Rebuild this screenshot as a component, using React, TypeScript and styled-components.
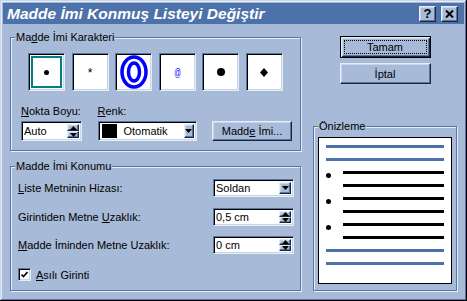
import styled, { createGlobalStyle, css } from "styled-components";

const face = "#a7bad7";
const titleBlue = "#4c72a9";
const highlight = "#e6edf7";
const light = "#c9d6ea";
const shadow = "#5776a6";
const darkShadow = "#1c2535";

const GlobalStyle = createGlobalStyle`
  * {
    box-sizing: border-box;
  }
  html, body {
    margin: 0;
    padding: 0;
    background: ${face};
  }
  body {
    font-family: "Liberation Sans", Arial, sans-serif;
    font-size: 11px;
    color: #000;
  }
`;

const raised = css`
  background: ${face};
  border: 1px solid;
  border-color: ${highlight} ${darkShadow} ${darkShadow} ${highlight};
  box-shadow: inset -1px -1px 0 ${shadow}, inset 1px 1px 0 ${light};
`;

const sunken = css`
  background: #fff;
  border: 1px solid;
  border-color: ${shadow} ${highlight} ${highlight} ${shadow};
  box-shadow: inset 1px 1px 0 #000, inset -1px -1px 0 ${light};
`;

const Window = styled.div`
  width: 467px;
  height: 301px;
  padding: 3px;
  display: flex;
  flex-direction: column;
  background: ${face};
  box-shadow: inset -1px -1px 0 #000, inset 1px 1px 0 ${light},
    inset -2px -2px 0 ${shadow}, inset 2px 2px 0 ${highlight};
`;

const TitleBar = styled.div`
  flex: none;
  height: 21px;
  display: flex;
  align-items: center;
  gap: 5px;
  padding: 0 6px 0 4px;
  background: ${titleBlue};
`;

const Title = styled.div`
  flex: 1;
  color: #fff;
  font-size: 15.5px;
  font-weight: bold;
  font-style: italic;
  white-space: nowrap;
`;

const TitleButton = styled.div`
  width: 17px;
  height: 16px;
  ${raised};
  display: flex;
  align-items: center;
  justify-content: center;
  font-size: 13px;
  font-weight: bold;
  line-height: 1;
`;

const Body = styled.div`
  flex: 1;
  display: flex;
  gap: 12px;
  padding: 7px 7px 0 7px;
`;

const LeftCol = styled.div`
  width: 291px;
  display: flex;
  flex-direction: column;
  gap: 9px;
`;

const RightCol = styled.div`
  width: 144px;
  display: flex;
  flex-direction: column;
  align-items: center;
`;

const Group = styled.fieldset<{ $h: number }>`
  margin: 0;
  padding: 0;
  min-width: 0;
  width: 100%;
  height: ${(p) => p.$h}px;
  border: 1px solid ${shadow};
  box-shadow: 1px 1px 0 ${highlight}, inset 1px 1px 0 ${highlight};
`;

const Legend = styled.legend`
  margin-left: 4px;
  padding: 0 1px;
  line-height: 13px;
  background: ${face};
`;

const CharContent = styled.div`
  padding: 9px 0 0 10px;
`;

const Bullets = styled.div`
  margin-left: 7px;
  display: grid;
  grid-template-columns: repeat(6, 37px);
  column-gap: 6.6px;
`;

const BulletBox = styled.div`
  height: 38px;
  ${sunken};
  padding: 2px;
  display: flex;
  align-items: center;
  justify-content: center;
`;

const Selection = styled.div`
  width: 100%;
  height: 100%;
  border: 2px solid #008080;
  display: flex;
  align-items: center;
  justify-content: center;
`;

const Dot = styled.div<{ $size: number }>`
  width: ${(p) => p.$size}px;
  height: ${(p) => p.$size}px;
  border-radius: 50%;
  background: #000;
`;

const Star = styled.span`
  font-size: 12px;
  line-height: 1;
  margin-top: 2px;
`;

const AtSign = styled.span`
  color: #0000ff;
  font-size: 11px;
  transform: scaleX(0.6);
`;

const FieldRow = styled.div`
  margin-top: 14px;
  display: flex;
  align-items: flex-end;
  gap: 15.5px;
`;

const FieldCol = styled.div<{ $w: number }>`
  width: ${(p) => p.$w}px;
  display: flex;
  flex-direction: column;
`;

const Label = styled.div`
  line-height: 13px;
  margin-bottom: 3px;
  white-space: nowrap;
`;

const Field = styled.div<{ $w?: number; $h: number }>`
  width: ${(p) => (p.$w ? `${p.$w}px` : "100%")};
  height: ${(p) => p.$h}px;
  ${sunken};
  padding: 2px;
  display: flex;
  align-items: stretch;
`;

const FieldText = styled.div`
  flex: 1;
  min-width: 0;
  display: flex;
  align-items: center;
  gap: 7px;
  white-space: nowrap;
  overflow: hidden;
`;

const Swatch = styled.div`
  width: 15px;
  height: 14px;
  margin-left: 1px;
  flex: none;
  background: #000;
`;

const SpinButtons = styled.div`
  width: 12px;
  flex: none;
  display: flex;
  flex-direction: column;
`;

const SpinButton = styled.div`
  flex: 1;
  ${raised};
  display: flex;
  align-items: center;
  justify-content: center;
`;

const DropButton = styled.div<{ $w: number }>`
  flex: none;
  width: ${(p) => p.$w}px;
  ${raised};
  display: flex;
  align-items: center;
  justify-content: center;
`;

const PushButton = styled.div<{ $w: number; $h: number; $default?: boolean }>`
  width: ${(p) => p.$w}px;
  height: ${(p) => p.$h}px;
  flex: none;
  ${raised};
  display: flex;
  align-items: center;
  justify-content: center;
  white-space: nowrap;
  ${(p) =>
    p.$default &&
    css`
      border-color: #000;
      box-shadow: inset 1px 1px 0 ${highlight}, inset -1px -1px 0 ${darkShadow},
        inset 2px 2px 0 ${light}, inset -2px -2px 0 ${shadow};
      padding: 3px;
    `}
`;

const FocusRect = styled.div`
  width: 100%;
  height: 100%;
  border: 1px dotted #000;
  display: flex;
  align-items: center;
  justify-content: center;
`;

const PositionContent = styled.div`
  padding: 6px 6px 0 7px;
  display: flex;
  flex-direction: column;
  gap: 10.5px;
`;

const PositionRow = styled.div`
  display: flex;
  align-items: center;
  justify-content: space-between;
`;

const CheckRow = styled.div`
  margin-top: 3.5px;
  display: flex;
  align-items: center;
  gap: 5px;
`;

const CheckBox = styled.div`
  width: 13px;
  height: 13px;
  ${sunken};
  display: flex;
  align-items: center;
  justify-content: center;
`;

const Preview = styled.div`
  height: 147px;
  margin: 4px 4px 0 4px;
  background: #fff;
  border: 1px solid #000;
  padding: 7px 7px 0 7px;
  display: flex;
  flex-direction: column;
  gap: 10px;
`;

const PreviewRow = styled.div`
  height: 3px;
  display: flex;
  align-items: flex-start;
`;

const PreviewLine = styled.div<{ $blue?: boolean; $indent?: number }>`
  flex: 1;
  height: 3px;
  margin-left: ${(p) => p.$indent ?? 0}px;
  background: ${(p) => (p.$blue ? titleBlue : "#000")};
`;

const PreviewDot = styled.div`
  width: 5px;
  height: 5px;
  margin-top: 2px;
  margin-right: 12px;
  border-radius: 50%;
  background: #000;
`;

const DownArrow = () => (
  <svg width="7" height="4" viewBox="0 0 7 4">
    <path d="M0 0h7L3.5 4z" fill="#000" />
  </svg>
);

const UpArrow = () => (
  <svg width="7" height="4" viewBox="0 0 7 4">
    <path d="M0 4h7L3.5 0z" fill="#000" />
  </svg>
);

const Spin = ({ w, h, value }: { w?: number; h: number; value: string }) => (
  <Field $w={w} $h={h}>
    <FieldText>{value}</FieldText>
    <SpinButtons>
      <SpinButton>
        <UpArrow />
      </SpinButton>
      <SpinButton>
        <DownArrow />
      </SpinButton>
    </SpinButtons>
  </Field>
);

const Ring = () => (
  <svg width="28" height="34" viewBox="0 0 28 34">
    <ellipse cx="14" cy="17" rx="12" ry="15" fill="none" stroke="#0000ff" strokeWidth="3.5" />
    <ellipse cx="14" cy="17" rx="5.5" ry="9" fill="#fff" stroke="#0000ff" strokeWidth="3.5" />
  </svg>
);

const Diamond = () => (
  <svg width="8" height="9" viewBox="0 0 8 9">
    <path d="M4 0L8 4.5 4 9 0 4.5z" fill="#000" />
  </svg>
);

const preview: { kind: "blue" | "bullet" | "cont" }[] = [
  { kind: "blue" },
  { kind: "blue" },
  { kind: "bullet" },
  { kind: "cont" },
  { kind: "bullet" },
  { kind: "cont" },
  { kind: "bullet" },
  { kind: "cont" },
  { kind: "blue" },
  { kind: "blue" },
];

function App() {
  return (
    <>
      <GlobalStyle />
      <Window>
        <TitleBar>
          <Title>Madde İmi Konmuş Listeyi Değiştir</Title>
          <TitleButton>?</TitleButton>
          <TitleButton>
            <svg width="9" height="8" viewBox="0 0 9 8">
              <path d="M1 0.5L8 7.5M8 0.5L1 7.5" stroke="#000" strokeWidth="2" />
            </svg>
          </TitleButton>
        </TitleBar>
        <Body>
          <LeftCol>
            <Group $h={120}>
              <Legend>
                Ma<u>d</u>de İmi Karakteri
              </Legend>
              <CharContent>
                <Bullets>
                  <BulletBox>
                    <Selection>
                      <Dot $size={5} />
                    </Selection>
                  </BulletBox>
                  <BulletBox>
                    <Star>*</Star>
                  </BulletBox>
                  <BulletBox>
                    <Ring />
                  </BulletBox>
                  <BulletBox>
                    <AtSign>@</AtSign>
                  </BulletBox>
                  <BulletBox>
                    <Dot $size={8} />
                  </BulletBox>
                  <BulletBox>
                    <Diamond />
                  </BulletBox>
                </Bullets>
                <FieldRow>
                  <FieldCol $w={61}>
                    <Label>
                      <u>N</u>okta Boyu:
                    </Label>
                    <Spin h={20} value="Auto" />
                  </FieldCol>
                  <FieldCol $w={99}>
                    <Label>
                      <u>R</u>enk:
                    </Label>
                    <Field $h={20}>
                      <FieldText>
                        <Swatch />
                        Otomatik
                      </FieldText>
                      <DropButton $w={10}>
                        <DownArrow />
                      </DropButton>
                    </Field>
                  </FieldCol>
                  <PushButton $w={80} $h={20}>
                    Madd<u>e</u>&nbsp;İmi...
                  </PushButton>
                </FieldRow>
              </CharContent>
            </Group>
            <Group $h={131}>
              <Legend>Madde İmi Konumu</Legend>
              <PositionContent>
                <PositionRow>
                  <span>
                    <u>L</u>iste Metninin Hizası:
                  </span>
                  <Field $w={81} $h={18}>
                    <FieldText>Soldan</FieldText>
                    <DropButton $w={12}>
                      <DownArrow />
                    </DropButton>
                  </Field>
                </PositionRow>
                <PositionRow>
                  <span>
                    Girintiden Metne <u>U</u>zaklık:
                  </span>
                  <Spin w={81} h={18} value="0,5 cm" />
                </PositionRow>
                <PositionRow>
                  <span>
                    <u>M</u>adde İminden Metne Uzaklık:
                  </span>
                  <Spin w={81} h={18} value="0 cm" />
                </PositionRow>
                <CheckRow>
                  <CheckBox>
                    <svg width="7" height="7" viewBox="0 0 7 7">
                      <path d="M0.5 3.5L2.5 5.5L6.5 1" fill="none" stroke="#000" strokeWidth="1.6" />
                    </svg>
                  </CheckBox>
                  <span>
                    <u>A</u>sılı Girinti
                  </span>
                </CheckRow>
              </PositionContent>
            </Group>
          </LeftCol>
          <RightCol>
            <PushButton $w={91} $h={22} $default style={{ marginTop: 5 }}>
              <FocusRect>Tamam</FocusRect>
            </PushButton>
            <PushButton $w={91} $h={21} style={{ marginTop: 5 }}>
              İptal
            </PushButton>
            <Group $h={171} style={{ marginTop: 36 }}>
              <Legend>Önizleme</Legend>
              <Preview>
                {preview.map((row, i) => (
                  <PreviewRow key={i}>
                    {row.kind === "bullet" && <PreviewDot />}
                    <PreviewLine $blue={row.kind === "blue"} $indent={row.kind === "cont" ? 17 : 0} />
                  </PreviewRow>
                ))}
              </Preview>
            </Group>
          </RightCol>
        </Body>
      </Window>
    </>
  );
}

export default App;
